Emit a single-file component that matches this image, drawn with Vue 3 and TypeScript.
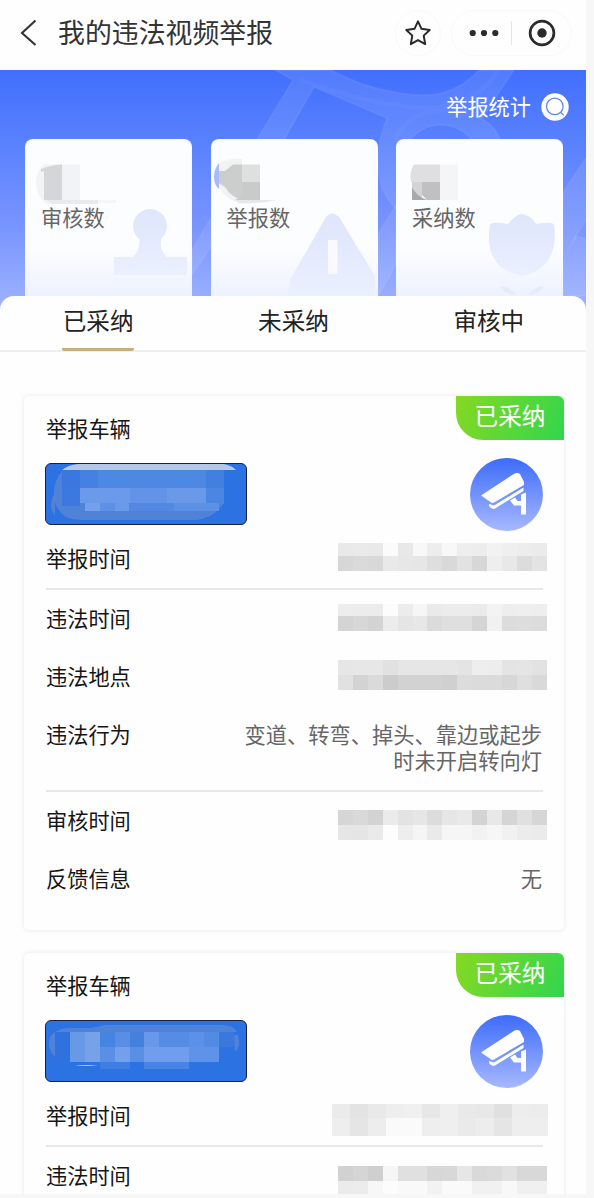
<script setup lang="ts">
interface Mosaic {
  x: number
  y: number
  cell: number
  heights: number[]
  rows: string[]
}

interface Field {
  label: string
  text?: string[]
  mosaic?: Mosaic
  divider?: boolean
}

interface Rect {
  x: number
  y: number
  w: number
  h: number
  fill: string
}

interface Report {
  id: number
  status: string
  plate: Rect[]
  haze: string[]
  sheen: string
  fields: Field[]
}

const tabs = ['已采纳', '未采纳', '审核中']

const cellsOf = (m: Mosaic): Rect[] => {
  const out: Rect[] = []
  let y = m.y
  m.rows.forEach((row, r) => {
    row.split(' ').forEach((tone, c) => {
      out.push({ x: m.x + c * m.cell, y, w: m.cell, h: m.heights[r], fill: `#${tone}${tone}${tone}` })
    })
    y += m.heights[r]
  })
  return out
}

const reports: Report[] = [
  {
    id: 1,
    status: '已采纳',
    haze: ['M16 7Q7 18 8 32 9 46 20 53 26 56 40 56H150Q168 54 177 40V7Z', 'M9 30Q1 40 9 52Z'],
    sheen: 'M16 6Q22 1 32 0H178Q187 2 190 6Z',
    plate: [
      { x: 17, y: 7, w: 18, h: 18, fill: '#3a78e0' },
      { x: 35, y: 7, w: 18, h: 18, fill: '#4680e1' },
      { x: 53, y: 7, w: 108, h: 18, fill: '#4d88e2' },
      { x: 161, y: 7, w: 18, h: 18, fill: '#437fdf' },
      { x: 17, y: 25, w: 18, h: 18, fill: '#3b78df' },
      { x: 35, y: 25, w: 50, h: 15, fill: '#6b9aea' },
      { x: 85, y: 25, w: 37, h: 15, fill: '#6293e8' },
      { x: 122, y: 25, w: 39, h: 15, fill: '#6b99e9' },
      { x: 161, y: 25, w: 18, h: 16, fill: '#4b86e2' },
      { x: 40, y: 40, w: 15, h: 8, fill: '#73a0ea' },
      { x: 55, y: 40, w: 15, h: 8, fill: '#5e91e5' },
      { x: 70, y: 40, w: 14, h: 8, fill: '#699ae9' },
      { x: 84, y: 40, w: 45, h: 8, fill: '#5389e3' },
      { x: 129, y: 40, w: 45, h: 8, fill: '#5c91e6' },
    ],
    fields: [
      {
        label: '举报时间',
        divider: true,
        mosaic: {
          x: 8, y: 4, cell: 14.9, heights: [13, 15],
          rows: ['e9 ea e9 fb e8 f8 ed f8 ee ed f2 ef ed eb', 'd7 da d8 e9 e7 e6 de d9 e2 d7 ee e8 dc e3'],
        },
      },
      {
        label: '违法时间',
        mosaic: {
          x: 8, y: 5, cell: 14.9, heights: [12, 14.5],
          rows: ['ed ec ec fc ec f6 ea ec ec eb f3 ee ef ee', 'd4 d7 d3 ec e5 e7 db df df d5 f1 dc dd dc'],
        },
      },
      {
        label: '违法地点',
        mosaic: {
          x: 8, y: 3, cell: 14.9, heights: [15, 15],
          rows: ['e6 e7 e7 e1 e6 e6 e6 e6 e4 ee ed e4 e5 e2', 'e1 d3 da cc d2 d2 d2 d0 dc db db d7 df d9'],
        },
      },
      { label: '违法行为', divider: true, text: ['变道、转弯、掉头、靠边或起步', '时未开启转向灯'] },
      {
        label: '审核时间',
        mosaic: {
          x: 8, y: 9, cell: 14.9, heights: [15, 15],
          rows: ['d6 d9 d3 eb e3 e6 dc e6 e9 d4 e8 d5 e0 d6', 'e6 e5 ea fd ee f5 ea f6 f6 f2 f6 f1 ec eb'],
        },
      },
      { label: '反馈信息', text: ['无'] },
    ],
  },
  {
    id: 2,
    status: '已采纳',
    haze: ['M9 36Q0 26 4 16 9 8 22 7H45L60 4H175Q188 4 191 11H9Z', 'M188 14L192 14Q195 26 189 31Z'],
    sheen: 'M29 45Q40 43 52 45Z',
    plate: [
      { x: 10, y: 12, w: 15, h: 30, fill: '#2f72df' },
      { x: 25, y: 12, w: 15, h: 30, fill: '#6699e6' },
      { x: 40, y: 12, w: 15, h: 30, fill: '#77a2e9' },
      { x: 55, y: 12, w: 15, h: 15, fill: '#4584e1' },
      { x: 70, y: 12, w: 15, h: 15, fill: '#588fe5' },
      { x: 85, y: 12, w: 14, h: 15, fill: '#4481df' },
      { x: 99, y: 12, w: 15, h: 15, fill: '#6998eb' },
      { x: 114, y: 12, w: 30, h: 15, fill: '#558de5' },
      { x: 144, y: 12, w: 15, h: 15, fill: '#5b91e7' },
      { x: 159, y: 12, w: 15, h: 15, fill: '#518be4' },
      { x: 174, y: 12, w: 15, h: 15, fill: '#3a78dd' },
      { x: 55, y: 27, w: 15, h: 15, fill: '#5990e6' },
      { x: 70, y: 27, w: 15, h: 15, fill: '#74a0eb' },
      { x: 85, y: 27, w: 14, h: 15, fill: '#5a8fe6' },
      { x: 99, y: 27, w: 45, h: 15, fill: '#709eec' },
      { x: 144, y: 27, w: 30, h: 15, fill: '#5e93e8' },
      { x: 55, y: 42, w: 30, h: 7, fill: '#3e7ee1' },
      { x: 99, y: 42, w: 45, h: 7, fill: '#4784e3' },
    ],
    fields: [
      {
        label: '举报时间',
        divider: true,
        mosaic: {
          x: 2, y: 8, cell: 18, heights: [14, 18],
          rows: ['eb e3 e9 ee f0 e7 ef e9 e8 e0 ed ec', 'ee e5 ed fa fa ee ef ea ed e5 ee ee'],
        },
      },
      {
        label: '违法时间',
        mosaic: {
          x: 8, y: 10, cell: 14.9, heights: [15, 13],
          rows: ['d1 d5 cf f6 e0 e0 d7 d8 e6 d9 db e1 d8 d8', 'eb ec f7 fc f9 f9 f2 fa fa f1 f1 f8 f0 f0'],
        },
      },
    ],
  },
]
</script>

<template>
  <div class="page">
    <header class="navbar">
      <svg class="back" viewBox="0 0 18 28"><path d="M15.5 1.5 2 14l13.500 12" /></svg>
      <h1>我的违法视频举报</h1>
      <div class="round">
        <svg viewBox="0 0 28 28"><path d="M14 2.3l3.5 7.5 8.2 1.1-6 5.7 1.5 8.5-7.2-4-7.2 4 1.5-8.5-6-5.7 8.2-1.1z" /></svg>
      </div>
      <div class="capsule">
        <svg class="dots" viewBox="0 0 30 8"><circle cx="3.7" cy="4" r="3.1" /><circle cx="15" cy="4" r="3.1" /><circle cx="26.3" cy="4" r="3.1" /></svg>
        <i></i>
        <svg class="target" viewBox="0 0 28 28"><circle cx="14" cy="14" r="11.9" /><circle class="dot" cx="14" cy="14" r="4.7" /></svg>
      </div>
    </header>

    <section class="hero">
      <svg class="roads" viewBox="0 70 586 250">
        <path class="road" d="M275 70 293 80 258 138 192 250V275L285 138 314 87 387 118Q378 138 378 165A63 63 0 0 0 504 165Q504 130 482 119L494 100 514 70H479Q464 87 442 93 424 98 394 92 360 86 331 70ZM441 125A40 40 0 1 1 440.9 125Z" />
        <path class="road" d="M590 152 563 192V258L576 236 590 214Z" />
        <path class="road" d="M590 240 576 236 563 262V296H590Z" />
        <path class="road" d="M396 205 378 235V296L396 265Z" />
        <path class="mark" d="M300 80Q380 108 430 108 478 105 498 70M395 140Q410 110 445 110" />
      </svg>
      <div class="summary">
        <span>举报统计</span>
        <svg viewBox="0 0 28 28"><circle cx="14" cy="14" r="13.7" fill="#fff" /><g fill="none" stroke="#6083e8" stroke-width="1.2"><circle cx="13.8" cy="13.4" r="8.3" /><path d="m19.6 19.2 3.2 3" /></g></svg>
      </div>
      <div class="stats">
        <div class="stat">
          <svg viewBox="0 0 167 157">
            <defs>
              <linearGradient id="decor" x1="0" y1="0" x2="0" y2="1"><stop stop-color="#dfe5fb" /><stop offset="1" stop-color="#eaf0fe" /></linearGradient>
            </defs>
            <path d="M19 25Q11 32 11 44T21 65H37V25Z" fill="#f3f4f6" />
            <path d="M16 30Q25 26 37 25.500V61H19V32L16 33Z" fill="#d5d6d8" />
            <path d="M37 25.500H55V61H37Z" fill="#f2f3f6" />
            <path d="M21 61H73V65H28Z" fill="#e9eaed" />
            <path d="M73 61H91V64H73Z" fill="#f5f6f8" />
            <path d="M114 100A17 17 0 1 1 136 100Q134 111 142 118H162V136H89V118H108Q116 110 114 100Z" fill="url(#decor)" />
            <path d="M89 139H162V142H89Z" fill="#f0f4fe" />
          </svg>
          <span>审核数</span>
        </div>
        <div class="stat">
          <svg viewBox="0 0 167 157">
            <path d="M8 24Q20 19 31 20V65Q15 61 8 48Z" fill="#f1f2f2" />
            <path d="M8 24Q3 30 3 38 3 46 8 50Z" fill="#a9bbff" />
            <path d="M8 32H14L22 25.500H31V61Q20 58 14 48L8 44Z" fill="#cccece" />
            <path d="M31 25.500H49V43H31Z" fill="#dedfdf" />
            <path d="M31 43H49V61H24L31 57Z" fill="#c9cbcb" />
            <path d="M24 61H66Q50 65 28 64Z" fill="#e7e8ea" />
            <path d="M115 78Q121 71 128 78L164 137V157H76L79 141Z" fill="url(#decor)" />
            <rect x="117" y="101" width="9.500" height="34" rx="1" fill="#f8faff" />
          </svg>
          <span>举报数</span>
        </div>
        <div class="stat">
          <svg viewBox="0 0 167 157">
            <path d="M18 25.500H44V43H15Q13 33 18 25.500Z" fill="#dfdfe1" />
            <path d="M16 43H26V61H16Z" fill="#d4d4d6" />
            <path d="M26 43H44V61H31L26 56Z" fill="#c0c0c3" />
            <path d="M16 48Q20 57 31 61H16Z" fill="#a9a9ac" />
            <path d="M44 25.500H62V61H44Z" fill="#f5f5f7" />
            <path d="M94 86Q95 82 112 85 119 76 126 75 134 76 140 85 157 82 158 86C162 112 152 132 126 137 99 132 89 112 94 86Z" fill="url(#decor)" />
            <path d="M104 147Q115 148 120 156 109 156 104 147ZM148 147Q137 148 132 156 143 156 148 147Z" fill="#e5ebfc" />
          </svg>
          <span>采纳数</span>
        </div>
      </div>
    </section>

    <nav class="tabs">
      <div v-for="(tab, i) in tabs" :key="tab" class="tab"><span :class="{ active: i === 0 }">{{ tab }}</span></div>
    </nav>

    <main>
      <article v-for="report in reports" :key="report.id" class="card">
        <div class="badge">{{ report.status }}</div>
        <div class="label">举报车辆</div>
        <div class="vehicle">
          <div class="plate">
            <svg viewBox="0 0 199 60">
              <path v-for="d in report.haze" :key="d" :d="d" fill="#8b9fc9" opacity=".38" />
              <path :d="report.sheen" fill="#b5c8e8" />
              <rect v-for="(c, i) in report.plate" :key="i" :x="c.x - 1" :y="c.y - 1" :width="c.w" :height="c.h" :fill="c.fill" shape-rendering="crispEdges" />
            </svg>
          </div>
          <svg class="camera" viewBox="0 0 73 73">
            <defs>
              <linearGradient :id="'disc' + report.id" x1="0" y1="0" x2="0" y2="1"><stop stop-color="#3d6cfb" /><stop offset="1" stop-color="#a7b8ff" /></linearGradient>
            </defs>
            <circle cx="36.5" cy="36.5" r="36.5" :fill="`url(#disc${report.id})`" />
            <g fill="#fff">
              <path d="M11 37.500 43 16.500Q47 14 50 16L54 24V27L24 44.500Q22 45.500 20.500 44Z" />
              <path d="M19 46 24 47.500 53.500 29.500V33L25 50.500Q22 52 19 48Z" />
              <path d="M40 42.500 45 39.500 47.500 43H51V36.500L56 34.500V56.500H51V47.500H44Z" />
            </g>
          </svg>
        </div>
        <div v-for="field in report.fields" :key="field.label" class="field" :class="{ divided: field.divider }">
          <span class="label">{{ field.label }}</span>
          <svg v-if="field.mosaic" class="mosaic" viewBox="0 0 220 40">
            <rect v-for="(c, i) in cellsOf(field.mosaic)" :key="i" :x="c.x" :y="c.y" :width="c.w" :height="c.h" :fill="c.fill" shape-rendering="crispEdges" />
          </svg>
          <div v-else class="value"><div v-for="line in field.text" :key="line">{{ line }}</div></div>
        </div>
      </article>
    </main>
  </div>
</template>

<style>
body {
  background: #f7f7f7;
}
</style>

<style scoped>
.page {
  width: 586px;
  height: 1194px;
  overflow: hidden;
  background: #fefefe;
  color: #151515;
  font-family: "Noto Sans CJK SC", sans-serif;
  font-size: 21.2px;
  line-height: 26px;
}
svg {
  display: block;
  flex: none;
}
.navbar {
  display: flex;
  align-items: center;
  box-sizing: border-box;
  height: 70px;
  padding: 0 14px 4px 20px;
}
.back {
  width: 18px;
  height: 28px;
  fill: none;
  stroke: #333;
  stroke-width: 2.1;
}
h1 {
  flex: 1;
  margin: 0 0 2px 20px;
  color: #333;
  font-size: 26.9px;
  font-weight: 400;
  line-height: 40px;
}
.round,
.capsule {
  display: flex;
  align-items: center;
  box-sizing: border-box;
  height: 46px;
  border: 1px solid #f9f9f9;
  border-radius: 23px;
}
.round {
  justify-content: center;
  width: 46px;
  margin-right: 10px;
}
.round svg {
  width: 28px;
  height: 28px;
  fill: none;
  stroke: #2b2b2b;
  stroke-width: 2;
  stroke-linejoin: round;
}
.capsule {
  width: 121px;
  padding-left: 17px;
}
.dots {
  width: 30px;
  height: 8px;
  fill: #2b2b2b;
}
.capsule i {
  width: 1px;
  height: 24px;
  margin: 0 16px 0 12px;
  background: #e5e5e5;
}
.target {
  width: 28px;
  height: 28px;
  fill: none;
  stroke: #2b2b2b;
  stroke-width: 2.7;
}
.target .dot {
  fill: #2b2b2b;
  stroke: none;
}
.hero {
  position: relative;
  box-sizing: border-box;
  height: 250px;
  padding: 23px 17px 0 25px;
  background: linear-gradient(#416ffd, #5a82fe 30%, #7894fe 62%, #a3b6ff);
}
.roads {
  position: absolute;
  inset: 0;
  width: 586px;
  height: 250px;
}
.road {
  fill: #fff;
  fill-opacity: 0.09;
  fill-rule: evenodd;
  stroke: #fff;
  stroke-opacity: 0.06;
  stroke-width: 2;
}
.mark {
  fill: none;
  stroke: #fff;
  stroke-opacity: 0.03;
  stroke-width: 5;
}
.summary {
  position: relative;
  display: flex;
  align-items: center;
  justify-content: flex-end;
  gap: 10px;
  height: 28px;
  color: #fff;
}
.summary span {
  margin-bottom: 2px;
}
.summary svg {
  width: 28px;
  height: 28px;
}
.stats {
  position: relative;
  display: flex;
  gap: 18.5px;
  margin-top: 18px;
}
.stat {
  position: relative;
  flex: none;
  box-sizing: border-box;
  width: 167px;
  height: 157px;
  padding: 65px 16px 0;
  border-radius: 8px 8px 0 0;
  background: linear-gradient(#fcfdff 0, #fcfdff 70%, #edf2ff);
  color: #666;
}
.stat svg {
  position: absolute;
  inset: 0;
  width: 167px;
  height: 157px;
}
.stat span {
  position: relative;
}
.tabs {
  position: relative;
  display: flex;
  box-sizing: border-box;
  height: 56px;
  margin-top: -24px;
  border-bottom: 2px solid #efefef;
  border-radius: 14px 14px 0 0;
  background: #fefefe;
  color: #222;
  font-size: 23.6px;
}
.tab {
  display: flex;
  flex: 1;
  justify-content: center;
}
.tab span {
  box-sizing: border-box;
  height: 55px;
  padding: 11px 0 0 1px;
  border-radius: 2px;
}
.tab .active {
  border-bottom: 3px solid #c5b17e;
}
main {
  display: flex;
  flex-direction: column;
  gap: 23px;
  padding: 44px 22px 0 24px;
}
.card {
  position: relative;
  flex: none;
  padding: 19px 21px 39px 22px;
  border-radius: 5px;
  background: #fefefe;
  box-shadow: 0 0 5px rgba(0, 0, 0, 0.09);
}
.badge {
  position: absolute;
  top: 0;
  right: 0;
  width: 108px;
  height: 44px;
  border-radius: 0 6px 0 27px;
  background: linear-gradient(115deg, #86d921, #31d64e);
  color: #fff;
  font-size: 23.6px;
  line-height: 39px;
  text-align: center;
}
.vehicle {
  display: flex;
  align-items: center;
  justify-content: space-between;
  height: 62px;
  margin: 22px 0 20px -1px;
}
.plate {
  box-sizing: border-box;
  width: 202px;
  height: 62px;
  overflow: hidden;
  border: 1.5px solid #15213d;
  border-radius: 6px;
  background: #2d72e2;
}
.plate svg {
  width: 199px;
  height: 60px;
}
.camera {
  width: 73px;
  height: 73px;
}
.field {
  display: flex;
  justify-content: space-between;
}
.field + .field {
  margin-top: 32px;
}
.field.divided {
  padding-bottom: 17px;
  border-bottom: 2px solid #e8e8e8;
}
.field.divided + .field {
  margin-top: 15px;
}
.mosaic {
  width: 220px;
  height: 40px;
  margin: -6px -7px -8px 0;
}
.value {
  padding-right: 1px;
  color: #666;
  font-size: 21.25px;
  text-align: right;
}
</style>
